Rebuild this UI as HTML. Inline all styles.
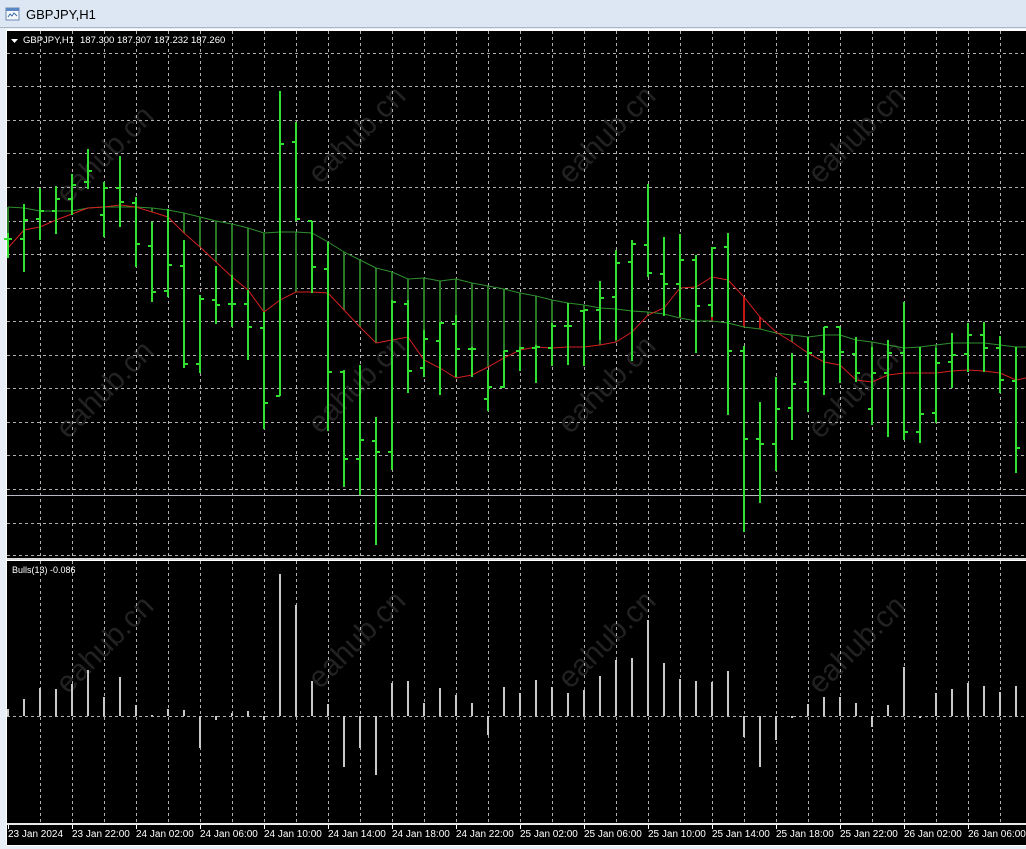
<!DOCTYPE html>
<html><head><meta charset="utf-8"><style>
html,body{margin:0;padding:0;width:1026px;height:849px;overflow:hidden;background:#dce6f2;font-family:"Liberation Sans",sans-serif;}
svg{display:block}
</style></head><body>
<svg width="1026" height="849" viewBox="0 0 1026 849" xmlns="http://www.w3.org/2000/svg" font-family="Liberation Sans, sans-serif">
<rect x="0" y="0" width="1026" height="28" fill="#dde7f3"/>
<rect x="0" y="27" width="1026" height="1" fill="#a9b6c6"/>
<rect x="0" y="28" width="1026" height="821" fill="#e8eef6"/>
<rect x="6" y="29" width="1020" height="817" fill="#ffffff"/>
<rect x="6" y="8" width="13" height="12" fill="#f4f8fc" stroke="#6a88b0" stroke-width="1"/>
<rect x="6" y="8" width="13" height="3" fill="#5b86c4"/>
<path d="M8 17l2-3 2 2 2-3 3 3" stroke="#3a6aa8" stroke-width="1" fill="none"/>
<text x="26" y="19" font-size="13" fill="#000">GBPJPY,H1</text>
<rect x="7" y="31" width="1019" height="527" fill="#000"/>
<rect x="7" y="561" width="1019" height="262" fill="#000"/>
<rect x="7" y="825" width="1019" height="20" fill="#000"/>
<g font-size="30" fill="#222" font-family="Liberation Sans, sans-serif">
<text transform="translate(68,205) rotate(-45)">eahub.cn</text>
<text transform="translate(320,185) rotate(-45)">eahub.cn</text>
<text transform="translate(570,185) rotate(-45)">eahub.cn</text>
<text transform="translate(820,185) rotate(-45)">eahub.cn</text>
<text transform="translate(68,440) rotate(-45)">eahub.cn</text>
<text transform="translate(320,435) rotate(-45)">eahub.cn</text>
<text transform="translate(570,435) rotate(-45)">eahub.cn</text>
<text transform="translate(820,440) rotate(-45)">eahub.cn</text>
<text transform="translate(68,695) rotate(-45)">eahub.cn</text>
<text transform="translate(320,690) rotate(-45)">eahub.cn</text>
<text transform="translate(570,690) rotate(-45)">eahub.cn</text>
<text transform="translate(820,695) rotate(-45)">eahub.cn</text>
</g>
<g stroke="#b0b0b0" stroke-width="1" stroke-dasharray="3,3" fill="none">
<path d="M40.5 31V557M72.5 31V557M104.5 31V557M136.5 31V557M168.5 31V557M200.5 31V557M232.5 31V557M264.5 31V557M296.5 31V557M328.5 31V557M360.5 31V557M392.5 31V557M424.5 31V557M456.5 31V557M488.5 31V557M520.5 31V557M552.5 31V557M584.5 31V557M616.5 31V557M648.5 31V557M680.5 31V557M712.5 31V557M744.5 31V557M776.5 31V557M808.5 31V557M840.5 31V557M872.5 31V557M904.5 31V557M936.5 31V557M968.5 31V557M1000.5 31V557"/>
<path d="M40.5 561V823M72.5 561V823M104.5 561V823M136.5 561V823M168.5 561V823M200.5 561V823M232.5 561V823M264.5 561V823M296.5 561V823M328.5 561V823M360.5 561V823M392.5 561V823M424.5 561V823M456.5 561V823M488.5 561V823M520.5 561V823M552.5 561V823M584.5 561V823M616.5 561V823M648.5 561V823M680.5 561V823M712.5 561V823M744.5 561V823M776.5 561V823M808.5 561V823M840.5 561V823M872.5 561V823M904.5 561V823M936.5 561V823M968.5 561V823M1000.5 561V823"/>
<path d="M7 53.5H1026M7 86.5H1026M7 120.5H1026M7 153.5H1026M7 187.5H1026M7 221.5H1026M7 254.5H1026M7 288.5H1026M7 321.5H1026M7 355.5H1026M7 388.5H1026M7 422.5H1026M7 455.5H1026M7 489.5H1026M7 523.5H1026M7 555.5H1026M7 716.5H1026"/>
</g>
<path d="M7 495.5H1026" stroke="#b8b8c0" stroke-width="1"/>
<path stroke="#2a7a2a" stroke-width="2" fill="none" d="M8 207V248M24 208V230M40 211V227M56 211V220M72 211V214M152 208V212M168 210V217M184 213V233M200 217V247M216 221V262M232 224V277M248 228V290M264 233V312M280 232V300M296 232V292M312 233V292M328 242V293M344 252V310M360 260V327M376 268V343M392 272V340M408 279V337M424 278V360M440 281V368M456 279V378M472 283V375M488 286V367M504 289V358M520 293V350M536 296V347M552 300V348M568 303V347M584 305V347M600 308V345M616 309V342M632 311V332M648 312V315M776 333V332M792 335V342M808 337V353M824 335V362M840 335V365M856 340V380M872 342V382M888 345V375M904 348V373M920 347V373M936 345V373M952 343V371M968 343V370M984 343V371M1000 345V373M1016 347V380"/>
<path stroke="#c01818" stroke-width="2" fill="none" d="M664 308V314M680 288V318M696 287V321M712 277V321M728 280V323M744 297V327M760 317V329"/>
<polyline fill="none" stroke="#2f8f2f" stroke-width="1" points="8,207 24,208 40,211 56,211 72,211 88,208 104,207 120,207 136,207 152,208 168,210 184,213 200,217 216,221 232,224 248,228 264,233 280,232 296,232 312,233 328,242 344,252 360,260 376,268 392,272 408,279 424,278 440,281 456,279 472,283 488,286 504,289 520,293 536,296 552,300 568,303 584,305 600,308 616,309 632,311 648,312 664,314 680,318 696,321 712,321 728,323 744,327 760,329 776,333 792,335 808,337 824,335 840,335 856,340 872,342 888,345 904,348 920,347 936,345 952,343 968,343 984,343 1000,345 1016,347 1026,347"/>
<polyline fill="none" stroke="#d42020" stroke-width="1" points="8,248 24,230 40,227 56,220 72,214 88,208 104,207 120,205 136,207 152,212 168,217 184,233 200,247 216,262 232,277 248,290 264,312 280,300 296,292 312,292 328,293 344,310 360,327 376,343 392,340 408,337 424,360 440,368 456,378 472,375 488,367 504,358 520,350 536,347 552,348 568,347 584,347 600,345 616,342 632,332 648,315 664,308 680,288 696,287 712,277 728,280 744,297 760,317 776,332 792,342 808,353 824,362 840,365 856,380 872,382 888,375 904,373 920,373 936,373 952,371 968,370 984,371 1000,373 1016,380 1026,378"/>
<path stroke="#32e032" stroke-width="2" fill="none" d="M8 233V258M24 204V272M40 188V240M56 186V234M72 174V215M88 149V189M104 182V237M120 156V227M136 197V267M152 222V302M168 209V297M184 240V368M200 295V373M216 266V324M232 275V327M248 290V360M264 312V429M280 91V396M296 122V221M312 221V293M328 242V431M344 370V487M360 365V495M376 417V545M392 300V470M408 300V393M424 330V377M440 322V395M456 315V377M472 347V377M488 370V411M504 351V388M520 347V371M536 345V383M552 323V366M568 303V365M584 310V366M600 281V340M616 250V340M632 240V361M648 184V277M664 237V316M680 234V317M696 255V353M712 247V317M728 233V415M744 346V532M760 402V503M776 377V471M792 353V440M808 337V412M824 327V395M840 327V383M856 337V382M872 347V425M888 340V437M904 302V440M920 347V443M936 348V423M952 333V388M968 323V372M984 322V372M1000 336V393M1016 347V473"/>
<path stroke="#32e032" stroke-width="2" fill="none" d="M4 239h4M8 239h4M20 239h4M24 220h4M36 219h4M40 211h4M52 211h4M56 199h4M68 199h4M72 185h4M84 182h4M88 171h4M100 215h4M104 188h4M116 188h4M120 202h4M132 203h4M136 244h4M148 246h4M152 292h4M164 291h4M168 265h4M180 266h4M184 364h4M196 364h4M200 299h4M212 300h4M216 305h4M228 304h4M232 304h4M244 304h4M248 327h4M260 328h4M264 403h4M276 396h4M280 144h4M292 142h4M296 219h4M308 221h4M312 267h4M324 269h4M328 372h4M340 372h4M344 459h4M356 459h4M360 440h4M372 441h4M376 452h4M388 452h4M392 302h4M404 304h4M408 371h4M420 368h4M424 339h4M436 341h4M440 323h4M452 324h4M456 349h4M468 349h4M472 349h4M484 399h4M488 387h4M500 387h4M504 351h4M516 351h4M520 348h4M532 348h4M536 347h4M548 348h4M552 326h4M564 326h4M568 326h4M580 311h4M584 310h4M596 310h4M600 298h4M612 297h4M616 263h4M628 262h4M632 244h4M644 245h4M648 273h4M660 274h4M664 284h4M676 284h4M680 260h4M692 260h4M696 306h4M708 305h4M712 248h4M724 247h4M728 351h4M740 351h4M744 439h4M756 439h4M760 444h4M772 444h4M776 409h4M788 408h4M792 384h4M804 382h4M808 353h4M820 352h4M824 327h4M836 327h4M840 352h4M852 354h4M856 373h4M868 409h4M872 373h4M884 373h4M888 353h4M900 353h4M904 432h4M916 432h4M920 414h4M932 413h4M936 363h4M948 362h4M952 355h4M964 354h4M968 335h4M980 335h4M984 348h4M996 348h4M1000 380h4M1012 381h4M1016 448h4"/>
<rect x="7" y="558" width="1019" height="2" fill="#d8d8d8"/>
<rect x="7" y="823" width="1019" height="2" fill="#e8e8e8"/>
<path stroke="#c8c8c8" stroke-width="2" fill="none" d="M8 716V709M24 716V699M40 716V688M56 716V689M72 716V684M88 716V670M104 716V697M120 716V677M136 716V705M152 716V715M168 716V709M184 716V710M200 716V748M216 716V720M232 716V713M248 716V711M264 716V720M280 716V574M296 716V605M312 716V681M328 716V704M344 716V767M360 716V748M376 716V775M392 716V683M408 716V681M424 716V703M440 716V688M456 716V695M472 716V703M488 716V735M504 716V687M520 716V693M536 716V680M552 716V687M568 716V693M584 716V690M600 716V676M616 716V660M632 716V658M648 716V620M664 716V663M680 716V679M696 716V681M712 716V682M728 716V671M744 716V737M760 716V767M776 716V740M792 716V718M808 716V704M824 716V697M840 716V697M856 716V703M872 716V727M888 716V705M904 716V667M920 716V718M936 716V693M952 716V689M968 716V683M984 716V686M1000 716V692M1016 716V686"/>
<path d="M11 39h7l-3.5 4z" fill="#fff"/>
<text x="23" y="43" font-size="9.5" fill="#fff">GBPJPY,H1</text>
<text x="80" y="43" font-size="9.5" fill="#fff">187.300 187.307 187.232 187.260</text>
<text x="12" y="573" font-size="9" fill="#fff">Bulls(13) -0.086</text>
<path stroke="#fff" stroke-width="1" d="M8.5 825v4M72.5 825v4M136.5 825v4M200.5 825v4M264.5 825v4M328.5 825v4M392.5 825v4M456.5 825v4M520.5 825v4M584.5 825v4M648.5 825v4M712.5 825v4M776.5 825v4M840.5 825v4M904.5 825v4M968.5 825v4"/>
<g font-size="10" fill="#fff">
<text x="8" y="837">23 Jan 2024</text>
<text x="72" y="837">23 Jan 22:00</text>
<text x="136" y="837">24 Jan 02:00</text>
<text x="200" y="837">24 Jan 06:00</text>
<text x="264" y="837">24 Jan 10:00</text>
<text x="328" y="837">24 Jan 14:00</text>
<text x="392" y="837">24 Jan 18:00</text>
<text x="456" y="837">24 Jan 22:00</text>
<text x="520" y="837">25 Jan 02:00</text>
<text x="584" y="837">25 Jan 06:00</text>
<text x="648" y="837">25 Jan 10:00</text>
<text x="712" y="837">25 Jan 14:00</text>
<text x="776" y="837">25 Jan 18:00</text>
<text x="840" y="837">25 Jan 22:00</text>
<text x="904" y="837">26 Jan 02:00</text>
<text x="968" y="837">26 Jan 06:00</text>
</g>
</svg>
</body></html>
